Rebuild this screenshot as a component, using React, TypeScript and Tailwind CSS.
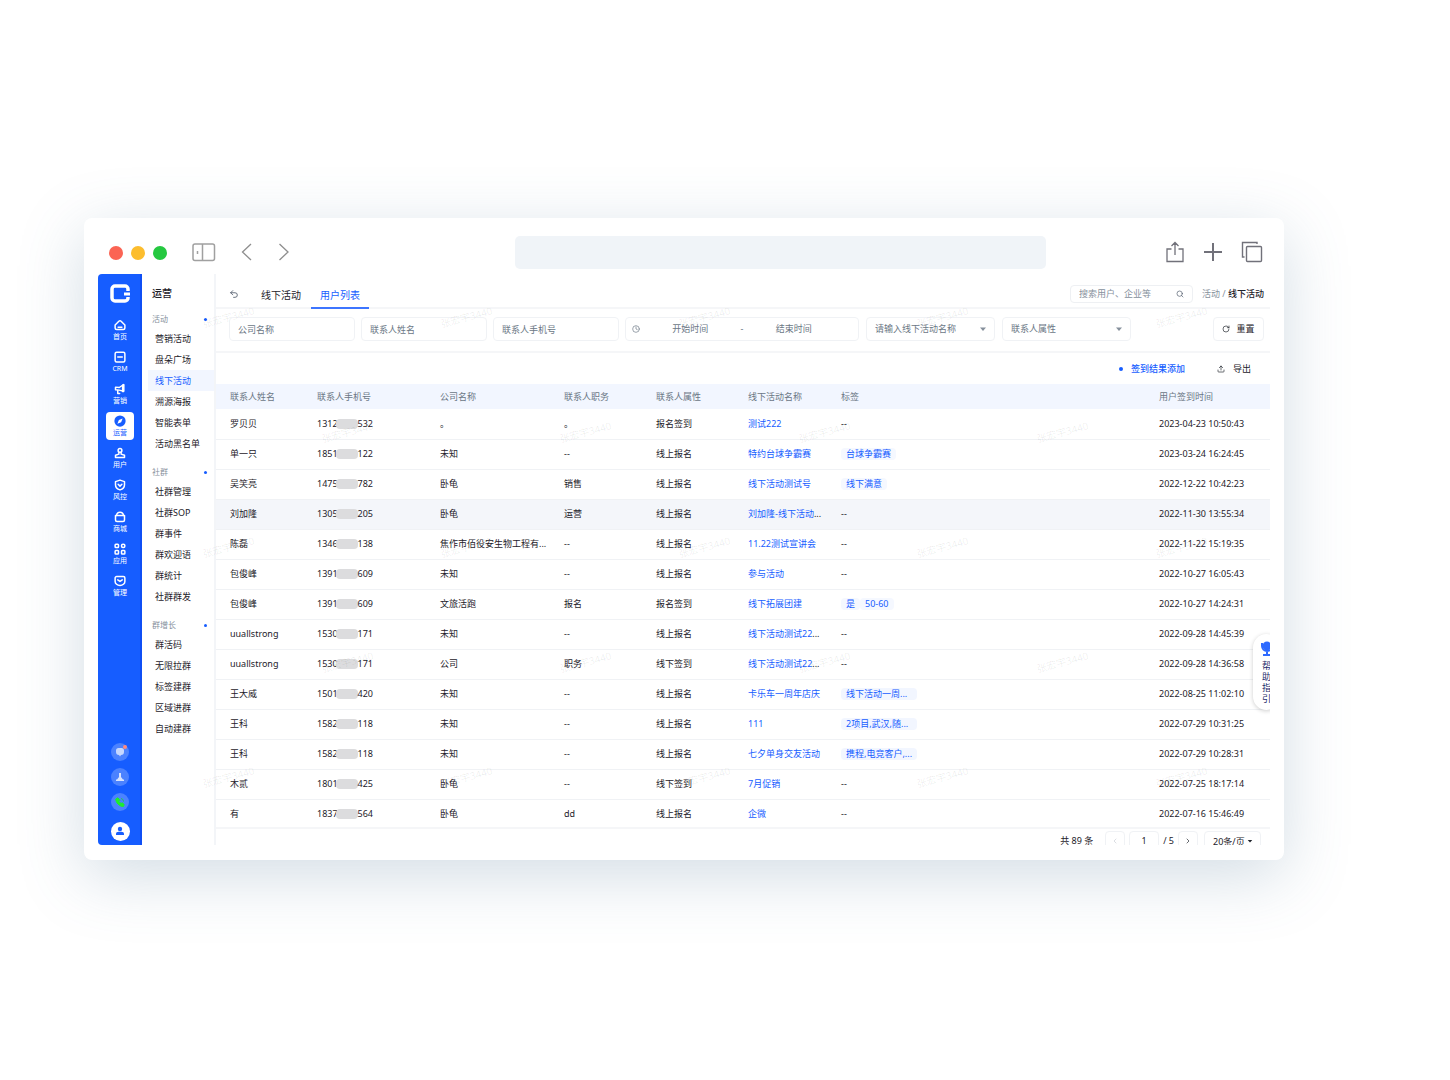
import React from "react";
import { ChevronLeft, ChevronRight, Search, Undo2, Upload, Clock, RotateCw } from "lucide-react";

type IconProps = { className?: string };

const stroke = {
  fill: "none",
  stroke: "currentColor",
  strokeWidth: 2,
  strokeLinecap: "round" as const,
  strokeLinejoin: "round" as const,
};

const HomeIcon = ({ className }: IconProps) => (
  <svg viewBox="0 0 16 16" className={className} {...stroke}>
    <path d="M1.500 8 6.500 3Q8 1.500 9.500 3l5 5v4a2 2 0 0 1-2 2h-9a2 2 0 0 1-2-2Z" />
    <path d="M5.500 11h5" />
  </svg>
);
const CrmIcon = ({ className }: IconProps) => (
  <svg viewBox="0 0 16 16" className={className} {...stroke}>
    <rect x="1.500" y="1.500" width="13" height="13" rx="2" />
    <path d="M5 8h6" />
  </svg>
);
const HornIcon = ({ className }: IconProps) => (
  <svg viewBox="0 0 16 16" className={className} {...stroke}>
    <path d="M2 5.500 7 6l6-4v9L7 9.500 2 9Z" />
    <path d="M5 10v4h2.500" />
    <path d="M12 3v8" strokeWidth="3" />
  </svg>
);
const CompassIcon = ({ className }: IconProps) => (
  <svg viewBox="0 0 16 16" className={className}>
    <circle cx="8" cy="8" r="7.500" fill="currentColor" />
    <path d="M11.500 4.500 9.500 9.500 4.500 11.500 6.500 6.500Z" fill="white" />
  </svg>
);
const UserIcon = ({ className }: IconProps) => (
  <svg viewBox="0 0 16 16" className={className} {...stroke}>
    <circle cx="8" cy="4.500" r="2.500" />
    <path d="M6.500 7.500v2L2 11v3h12v-3L9.500 9.500v-2" />
  </svg>
);
const ShieldIcon = ({ className }: IconProps) => (
  <svg viewBox="0 0 16 16" className={className} {...stroke}>
    <path d="M8 1.500 14 3.500v4c0 3.500-2.500 6-6 7-3.500-1-6-3.500-6-7v-4Z" />
    <path d="m5.500 7 2.500 2.500L10.500 7" />
  </svg>
);
const BagIcon = ({ className }: IconProps) => (
  <svg viewBox="0 0 16 16" className={className} {...stroke}>
    <path d="M2 6h12v6a2 2 0 0 1-2 2H4a2 2 0 0 1-2-2Z" />
    <path d="M3.500 6a4.500 4.500 0 0 1 9 0" />
  </svg>
);
const AppsIcon = ({ className }: IconProps) => (
  <svg viewBox="0 0 16 16" className={className} {...stroke}>
    <rect x="1.500" y="1.500" width="4.500" height="4.500" rx="1" />
    <rect x="10" y="1.500" width="4.500" height="4.500" rx="2" />
    <rect x="1.500" y="10" width="4.500" height="4.500" rx="1" />
    <rect x="10" y="10" width="4.500" height="4.500" rx="1" />
  </svg>
);
const ManageIcon = ({ className }: IconProps) => (
  <svg viewBox="0 0 16 16" className={className} {...stroke}>
    <path d="M1.500 4a2 2 0 0 1 2-2h9a2 2 0 0 1 2 2v4.500c0 3-3 5.500-6.500 5.500S1.500 11.500 1.500 8.500Z" />
    <path d="m5 6.500 3 2 3-2" />
  </svg>
);
const Caret = ({ className }: IconProps) => (
  <svg viewBox="0 0 8 8" className={className} fill="currentColor">
    <path d="M1 2.500h6L4 6Z" />
  </svg>
);

const rail = [
  { label: "首页", Icon: HomeIcon },
  { label: "CRM", Icon: CrmIcon },
  { label: "营销", Icon: HornIcon },
  { label: "运营", Icon: CompassIcon, active: true },
  { label: "用户", Icon: UserIcon },
  { label: "风控", Icon: ShieldIcon },
  { label: "商城", Icon: BagIcon },
  { label: "应用", Icon: AppsIcon },
  { label: "管理", Icon: ManageIcon },
];

const groups = [
  { title: "活动", items: ["营销活动", "盘朵广场", "线下活动", "溯源海报", "智能表单", "活动黑名单"] },
  { title: "社群", items: ["社群管理", "社群SOP", "群事件", "群欢迎语", "群统计", "社群群发"] },
  { title: "群增长", items: ["群活码", "无限拉群", "标签建群", "区域进群", "自动建群"] },
];

type Row = {
  name: string;
  phone: [string, string];
  company: string;
  job: string;
  attr: string;
  event: string;
  cut?: boolean;
  tags: string[];
  wide?: boolean;
  time: string;
};

const rows: Row[] = [
  { name: "罗贝贝", phone: ["1312", "532"], company: "。", job: "。", attr: "报名签到", event: "测试222", tags: [], time: "2023-04-23 10:50:43" },
  { name: "单一只", phone: ["1851", "122"], company: "未知", job: "--", attr: "线上报名", event: "特约台球争霸赛", tags: ["台球争霸赛"], time: "2023-03-24 16:24:45" },
  { name: "吴笑亮", phone: ["1475", "782"], company: "卧龟", job: "销售", attr: "线上报名", event: "线下活动测试号", tags: ["线下满意"], time: "2022-12-22 10:42:23" },
  { name: "刘加隆", phone: ["1305", "205"], company: "卧龟", job: "运营", attr: "线上报名", event: "刘加隆-线下活动", cut: true, tags: [], time: "2022-11-30 13:55:34" },
  { name: "陈磊", phone: ["1346", "138"], company: "焦作市佰役安生物工程有...", job: "--", attr: "线上报名", event: "11.22测试宣讲会", tags: [], time: "2022-11-22 15:19:35" },
  { name: "包俊峰", phone: ["1391", "609"], company: "未知", job: "--", attr: "线上报名", event: "参与活动", tags: [], time: "2022-10-27 16:05:43" },
  { name: "包俊峰", phone: ["1391", "609"], company: "文旅活跑", job: "报名", attr: "报名签到", event: "线下拓展团建", tags: ["是", "50-60"], time: "2022-10-27 14:24:31" },
  { name: "uuallstrong", phone: ["1530", "171"], company: "未知", job: "--", attr: "线上报名", event: "线下活动测试22", cut: true, tags: [], time: "2022-09-28 14:45:39" },
  { name: "uuallstrong", phone: ["1530", "171"], company: "公司", job: "职务", attr: "线下签到", event: "线下活动测试22", cut: true, tags: [], time: "2022-09-28 14:36:58" },
  { name: "王大威", phone: ["1501", "420"], company: "未知", job: "--", attr: "线上报名", event: "卡乐车一周年店庆", tags: ["线下活动一周..."], wide: true, time: "2022-08-25 11:02:10" },
  { name: "王科", phone: ["1582", "118"], company: "未知", job: "--", attr: "线上报名", event: "111", tags: ["2项目,武汉,随..."], wide: true, time: "2022-07-29 10:31:25" },
  { name: "王科", phone: ["1582", "118"], company: "未知", job: "--", attr: "线上报名", event: "七夕单身交友活动", tags: ["携程,电竞客户,..."], wide: true, time: "2022-07-29 10:28:31" },
  { name: "木贰", phone: ["1801", "425"], company: "卧龟", job: "--", attr: "线下签到", event: "7月促销", tags: [], time: "2022-07-25 18:17:14" },
  { name: "有", phone: ["1837", "564"], company: "卧龟", job: "dd", attr: "线上报名", event: "企微", tags: [], time: "2022-07-16 15:46:49" },
];

const columns = [
  { title: "联系人姓名", width: "w-[87px]" },
  { title: "联系人手机号", width: "w-[123px]" },
  { title: "公司名称", width: "w-[124px]" },
  { title: "联系人职务", width: "w-[92px]" },
  { title: "联系人属性", width: "w-[92px]" },
  { title: "线下活动名称", width: "w-[93px]" },
  { title: "标签", width: "w-auto" },
  { title: "用户签到时间", width: "w-[125px]" },
];

const watermarks = [
  "left-[104px] top-[36px]",
  "left-[342px] top-[36px]",
  "left-[580px] top-[36px]",
  "left-[818px] top-[36px]",
  "left-[1057px] top-[36px]",
  "left-[223px] top-[151px]",
  "left-[461px] top-[151px]",
  "left-[700px] top-[151px]",
  "left-[938px] top-[151px]",
  "left-[104px] top-[266px]",
  "left-[342px] top-[266px]",
  "left-[580px] top-[266px]",
  "left-[818px] top-[266px]",
  "left-[1057px] top-[266px]",
  "left-[223px] top-[381px]",
  "left-[461px] top-[381px]",
  "left-[700px] top-[381px]",
  "left-[938px] top-[381px]",
  "left-[104px] top-[496px]",
  "left-[342px] top-[496px]",
  "left-[580px] top-[496px]",
  "left-[818px] top-[496px]",
  "left-[1057px] top-[496px]",
];

function BrowserBar() {
  return (
    <header className="flex h-14 items-center pl-[25px] pr-[21px] pt-3">
      <div className="flex gap-2 pt-0.5">
        <span className="size-3.5 rounded-full bg-[#fb6454]" />
        <span className="size-3.5 rounded-full bg-[#fcbd2e]" />
        <span className="size-3.5 rounded-full bg-[#25c840]" />
      </div>
      <button aria-label="侧边栏" className="ml-[25px] text-[#a0a0a0]">
        <svg viewBox="0 0 24 20" className="h-5 w-6" fill="none" stroke="currentColor" strokeWidth="1.500">
          <rect x="1" y="2" width="21.500" height="16.500" rx="2" />
          <path d="M10.500 2v16.500M5.500 9v3" />
        </svg>
      </button>
      <button aria-label="后退" className="ml-[25px] text-[#8e8e8e]">
        <svg viewBox="0 0 12 18" className="h-[18px] w-3" fill="none" stroke="currentColor" strokeWidth="1.300">
          <path d="M10 1 1.500 9l8.500 8" />
        </svg>
      </button>
      <button aria-label="前进" className="ml-[25px] text-[#8e8e8e]">
        <svg viewBox="0 0 12 18" className="h-[18px] w-3" fill="none" stroke="currentColor" strokeWidth="1.300">
          <path d="M1.500 1 10 9l-8.500 8" />
        </svg>
      </button>
      <input aria-label="地址" className="ml-[225px] mr-[119px] h-[33px] min-w-0 flex-1 rounded-[5px] bg-[#f0f4f8] px-3 text-sm outline-none" />
      <div className="flex items-center gap-[19px] text-[#71717a]">
        <button aria-label="分享">
          <svg viewBox="0 0 20 22" className="h-[22px] w-5" fill="none" stroke="currentColor" strokeWidth="1.300">
            <path d="M6.500 8H2v12.500h16V8h-4.500M10 14V2M6.500 5 10 1.500 13.500 5" />
          </svg>
        </button>
        <button aria-label="新标签页">
          <svg viewBox="0 0 18 18" className="size-[18px]" stroke="currentColor" strokeWidth="2">
            <path d="M9 0v18M0 9h18" />
          </svg>
        </button>
        <button aria-label="标签页概览">
          <svg viewBox="0 0 22 22" className="size-[22px]" fill="none" stroke="currentColor" strokeWidth="1.400">
            <rect x="5.500" y="5.500" width="15" height="15" rx="1" />
            <path d="M3.500 16H1.500V1.500H16V3" />
          </svg>
        </button>
      </div>
    </header>
  );
}

function Rail() {
  return (
    <nav className="flex w-11 shrink-0 flex-col items-center border-r-2 border-[#0f4ff5] bg-[#165dff] pb-1 pl-0.5 pt-2.5 text-white">
      <svg viewBox="0 0 20 20" className="mb-3 size-5 shrink-0" fill="none" stroke="currentColor" strokeWidth="3.500">
        <path d="M18 7V5a3 3 0 0 0-3-3H5a3 3 0 0 0-3 3v9a3 3 0 0 0 3 3h10a3 3 0 0 0 3-3v-1" />
        <path d="M14 10h6" strokeWidth="3" />
      </svg>
      <ul className="flex flex-col gap-1">
        {rail.map(({ label, Icon, active }) => (
          <li key={label}>
            <a
              href="#"
              className={
                active
                  ? "flex h-7 w-7 flex-col items-center justify-center gap-px rounded-sm bg-white text-[#165dff]"
                  : "flex h-7 w-7 flex-col items-center justify-center gap-px text-white"
              }
            >
              <Icon className="size-3" />
              <span className="text-[7px] leading-[10px]">{label}</span>
            </a>
          </li>
        ))}
      </ul>
      <div className="mt-auto flex flex-col items-center gap-[7px]">
        <button aria-label="消息" className="relative flex size-[18px] items-center justify-center rounded-full bg-[#4b82ff]">
          <svg viewBox="0 0 10 10" className="size-2.5" fill="#c6d8ff">
            <path d="M1 3.500A2.500 2.500 0 0 1 3.500 1h3A2.500 2.500 0 0 1 9 3.500V5a3 3 0 0 1-3 3L5 9.500 4 8a3 3 0 0 1-3-3Z" />
          </svg>
          <span className="absolute right-0.5 top-0.5 size-1 rounded-full bg-[#ff8a80]" />
        </button>
        <button aria-label="下载" className="flex size-[18px] items-center justify-center rounded-full bg-[#4b82ff]">
          <svg viewBox="0 0 10 10" className="size-2.5" fill="#d6e3ff">
            <path d="M4 1h2v4l2 2.500h1V9H1V7.500h1L4 5Z" />
          </svg>
        </button>
        <button aria-label="电话" className="flex size-[18px] items-center justify-center rounded-full bg-[#4b82ff]">
          <svg viewBox="0 0 10 10" className="size-2.5">
            <path d="M.8 2 3 .8l1.800 2.500-.8 1.200L6 6.500l1.200-.8 2 1.800-.8 2C5 10 .5 5.500.8 2Z" fill="#1dee2c" stroke="#1dee2c" />
            <path d="M6 1.500a3 3 0 0 1 2.500 3" fill="none" stroke="#1dc45c" />
          </svg>
        </button>
        <button aria-label="账号" className="mt-1 flex size-[19px] items-center justify-center rounded-full bg-white text-[#165dff]">
          <svg viewBox="0 0 10 10" className="size-2.5" fill="currentColor">
            <circle cx="5" cy="3" r="2.200" />
            <path d="M1 9V8c0-1.500 1-2.200 2.500-2.200h3C8 5.800 9 6.500 9 8v1Z" />
          </svg>
        </button>
      </div>
    </nav>
  );
}

function Menu() {
  return (
    <aside className="w-[74px] shrink-0 border-r-2 border-[#f3f5f8] pl-1.5 pt-2.5">
      <h1 className="mb-3 pl-1 text-[10px] font-medium leading-[18px] text-[#1d2129]">运营</h1>
      {groups.map((group) => (
        <section key={group.title} className="mb-[13px]">
          <h2 className="flex h-2.5 items-center justify-between pl-1 pr-[7px] text-[8px] text-[#86909c]">
            {group.title}
            <span className="size-[3px] rounded-full bg-[#165dff]" />
          </h2>
          <ul className="mt-1">
            {group.items.map((item) => (
              <li key={item}>
                <a
                  href="#"
                  className={
                    item === "线下活动"
                      ? "block h-[21px] whitespace-nowrap bg-[#f2f6ff] pl-[7px] text-[9px] leading-[21px] text-[#165dff]"
                      : "block h-[21px] whitespace-nowrap pl-[7px] text-[9px] leading-[21px] text-[#1d2129]"
                  }
                >
                  {item}
                </a>
              </li>
            ))}
          </ul>
        </section>
      ))}
    </aside>
  );
}

function TopBar() {
  return (
    <div className="flex h-[35px] items-center border-b-2 border-[#f5f6f8] pl-[13px] pr-1.5 pt-[7px]">
      <button aria-label="返回" className="text-[#4e5969]">
        <Undo2 className="size-2.5" />
      </button>
      <div role="tablist" className="ml-3 flex self-stretch text-[10px]">
        <button role="tab" aria-selected="false" className="px-2.5 pt-0.5 text-[#1d2129]">
          线下活动
        </button>
        <button role="tab" aria-selected="true" className="-mb-0.5 border-b-2 border-[#3d75ff] px-[9px] pt-0.5 text-[#165dff]">
          用户列表
        </button>
      </div>
      <label className="ml-auto flex h-[18px] w-[123px] items-center rounded-sm border border-[#eef0f3] px-2">
        <input aria-label="搜索" placeholder="搜索用户、企业等" className="min-w-0 flex-1 text-[9px] outline-none placeholder:text-[#86909c]" />
        <Search className="size-2 text-[#4e5969]" />
      </label>
      <p className="ml-[9px] text-[9px] text-[#86909c]">
        活动 / <span className="font-medium text-[#1d2129]">线下活动</span>
      </p>
    </div>
  );
}

const field = "h-6 min-w-0 rounded-sm border border-[#f0f2f5] px-2 text-[9px] text-[#4e5969] outline-none placeholder:text-[#6b7785]";

function PickList({ label, className }: { label: string; className: string }) {
  return (
    <div className={className}>
      <select aria-label={label} className="block h-6 w-full appearance-none rounded-sm border border-[#f0f2f5] pl-2 text-[9px] text-[#6b7785] outline-none">
        <option>{label}</option>
      </select>
      <Caret className="pointer-events-none absolute right-2 top-2 size-2 text-[#86909c]" />
    </div>
  );
}

function Filters() {
  return (
    <form className="flex h-[44px] items-center border-b-2 border-[#f5f6f8] pb-0.5 pl-[13px] pr-1.5">
      <input aria-label="公司名称" placeholder="公司名称" className={`${field} mr-1.5 w-[126px]`} />
      <input aria-label="联系人姓名" placeholder="联系人姓名" className={`${field} mr-1.5 w-[126px]`} />
      <input aria-label="联系人手机号" placeholder="联系人手机号" className={`${field} mr-1.5 w-[126px]`} />
      <div className="mr-[7px] flex h-6 w-[234px] items-center rounded-sm border border-[#f0f2f5] px-1.5 text-[9px] text-[#6b7785]">
        <Clock className="size-2 shrink-0" />
        <input aria-label="开始时间" placeholder="开始时间" className="min-w-0 flex-1 text-center outline-none placeholder:text-[#6b7785]" />
        <span>-</span>
        <input aria-label="结束时间" placeholder="结束时间" className="min-w-0 flex-1 text-center outline-none placeholder:text-[#6b7785]" />
        <span className="w-2" />
      </div>
      <PickList label="请输入线下活动名称" className="relative mr-[7px] w-[129px]" />
      <PickList label="联系人属性" className="relative w-[129px]" />
      <button type="reset" className="ml-auto flex h-6 w-[51px] items-center justify-center gap-1.5 rounded-sm border border-[#f0f2f5] text-[9px] text-[#1d2129]">
        <RotateCw className="size-2" />
        重置
      </button>
    </form>
  );
}

function Phone({ parts }: { parts: [string, string] }) {
  return (
    <span className="flex w-14 items-center">
      {parts[0]}
      <span className="-ml-0.5 h-2.5 flex-1 rounded-sm bg-[#dcdcde]" />
      {parts[1]}
    </span>
  );
}

function UserTable() {
  return (
    <table className="w-full table-fixed whitespace-nowrap text-left text-[9px] leading-[12px]">
      <thead>
        <tr className="h-[25px] bg-[#f2f6ff] text-[#6b7785]">
          {columns.map((c) => (
            <th key={c.title} className={`${c.width} pl-3.5 font-normal`}>
              {c.title}
            </th>
          ))}
        </tr>
      </thead>
      <tbody className="text-[#1d2129]">
        {rows.map((r, i) => (
          <tr key={r.time} className={i === 3 ? "h-[30px] border-b border-[#f0f2f5] bg-[#f4f6fa]" : "h-[30px] border-b border-[#f0f2f5]"}>
            <td className="pl-3.5">{r.name}</td>
            <td className="pl-3.5">
              <Phone parts={r.phone} />
            </td>
            <td className="pl-3.5">{r.company}</td>
            <td className="pl-3.5">{r.job}</td>
            <td className="pl-3.5">{r.attr}</td>
            <td className="pl-3.5">
              <a href="#" className="text-[#165dff]">
                {r.event}
              </a>
              {r.cut && "..."}
            </td>
            <td className="pl-3.5">
              {r.tags.length === 0 ? (
                "--"
              ) : (
                <span className="flex">
                  {r.tags.map((t) => (
                    <span
                      key={t}
                      className={
                        r.wide
                          ? "w-[76px] rounded-sm bg-[#f2f6ff] px-[5px] text-[#165dff]"
                          : "rounded-sm bg-[#f5f8ff] px-[5px] text-[#165dff]"
                      }
                    >
                      {t}
                    </span>
                  ))}
                </span>
              )}
            </td>
            <td className="pl-3.5">{r.time}</td>
          </tr>
        ))}
      </tbody>
    </table>
  );
}

function Pager() {
  return (
    <footer className="relative -mt-[3px] flex h-[18px] items-start justify-end overflow-hidden border-t-2 border-[#f5f6f8] bg-white pr-[9px] pt-0.5 text-[9px] leading-[20px] text-[#1d2129]">
      <span className="mr-3">共 89 条</span>
      <button aria-label="上一页" className="flex size-5 items-center justify-center rounded-sm border border-[#f0f2f5] text-[#c9cdd4]">
        <ChevronLeft className="size-2" />
      </button>
      <input aria-label="页码" defaultValue="1" className="ml-1 h-5 w-[30px] rounded-sm border border-[#f0f2f5] text-center outline-none" />
      <span className="mx-1">/ 5</span>
      <button aria-label="下一页" className="flex size-5 items-center justify-center rounded-sm border border-[#f0f2f5]">
        <ChevronRight className="size-2" />
      </button>
      <div className="relative ml-1.5 w-[57px]">
        <select aria-label="每页条数" className="block h-5 w-full appearance-none rounded-sm border border-[#f0f2f5] pl-2 text-[9px] outline-none">
          <option>20条/页</option>
        </select>
        <Caret className="pointer-events-none absolute right-2 top-[7px] size-1.5" />
      </div>
    </footer>
  );
}

export default function App() {
  return (
    <div className="overflow-hidden bg-white pb-[220px] pl-[84px] pr-[166px] pt-[218px] font-['Noto_Sans','Noto_Sans_CJK_SC',sans-serif]">
      <div className="rounded-lg bg-white shadow-[0_16px_64px_rgba(80,120,150,0.25)]">
        <BrowserBar />
        <div className="px-3.5 pb-[15px]">
          <div className="relative flex overflow-hidden rounded-bl rounded-tl">
            <Rail />
            <Menu />
            <main className="min-w-0 flex-1">
              <TopBar />
              <Filters />
              <div className="flex h-[31px] items-center justify-end gap-8 pr-[19px] text-[9px]">
                <button className="flex items-center gap-2 font-medium text-[#165dff]">
                  <span className="size-1 rounded-full bg-[#165dff]" />
                  签到结果添加
                </button>
                <button className="flex items-center gap-2 text-[#1d2129]">
                  <Upload className="size-2" />
                  导出
                </button>
              </div>
              <UserTable />
              <Pager />
            </main>
            {watermarks.map((place) => (
              <span key={place} aria-hidden="true" className={`pointer-events-none absolute -rotate-[15deg] text-[10px] leading-[14px] text-black/8 ${place}`}>
                张宏宇3440
              </span>
            ))}
            <button className="absolute right-[-10px] top-[360px] flex w-[27px] flex-col items-center rounded-[14px] bg-white py-1.5 text-[9px] leading-[11px] text-[#1d2a6b] shadow-[0_1px_4px_rgba(0,0,0,0.2)]">
              <svg viewBox="0 0 14 16" className="mb-1 h-4 w-3.5 text-[#2f6bff]" fill="none" stroke="currentColor" strokeWidth="2">
                <circle cx="7" cy="6" r="3.500" fill="currentColor" />
                <path d="M2 3v3a5 5 0 0 0 10 0V3M7 11v4M3 15h8" />
              </svg>
              <span className="w-[9px]">帮助指引</span>
            </button>
          </div>
        </div>
      </div>
    </div>
  );
}
